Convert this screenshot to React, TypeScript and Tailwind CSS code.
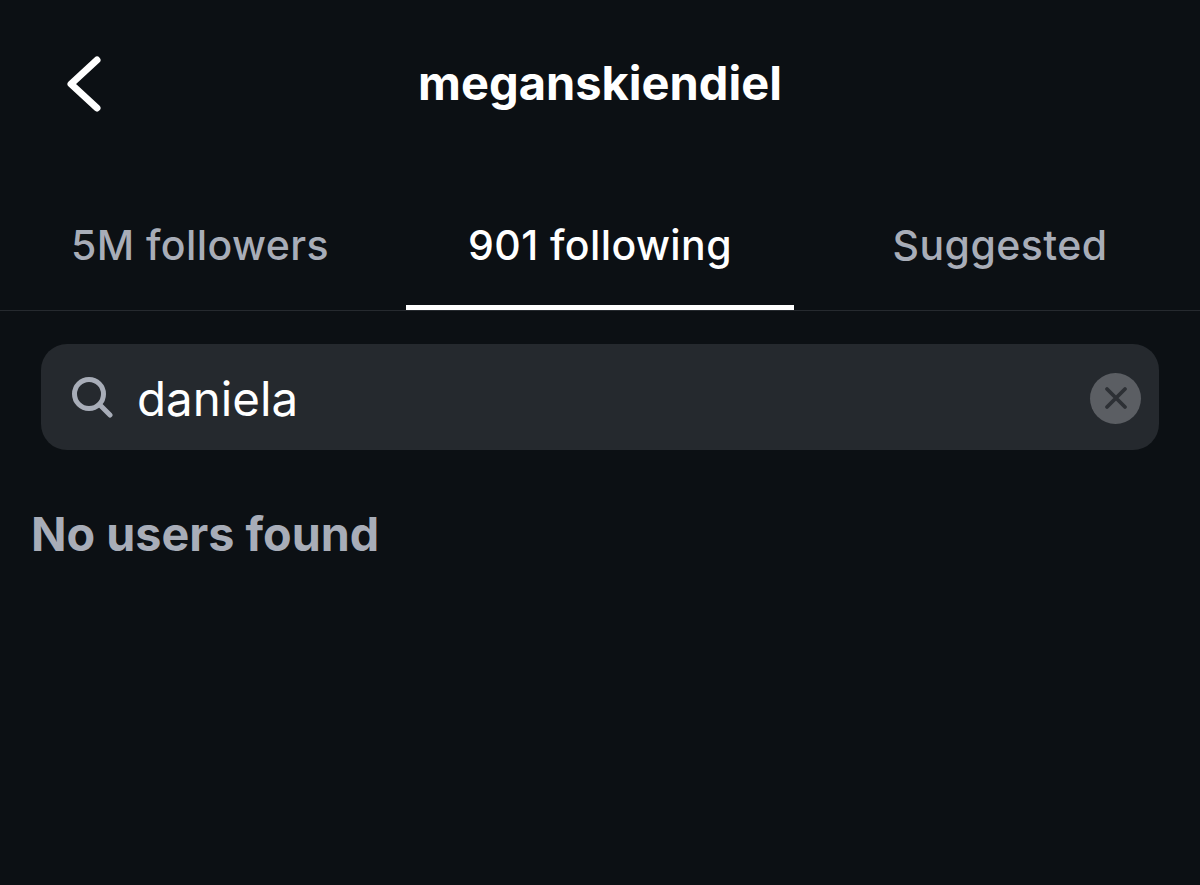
export default function App() {
  return (
    <div className="h-[885px] w-[1200px] overflow-hidden bg-[#0c1014] font-['Inter',sans-serif] text-white">
      <header className="relative flex h-[166px] items-center justify-center">
        <svg className="absolute left-[60px] top-[50px]" width="48" height="68" viewBox="0 0 48 68" fill="none" stroke="#fff" strokeWidth="7" strokeLinecap="round" strokeLinejoin="round">
          <path d="M37 10 L11 34 L37 58" />
        </svg>
        <h1 className="pb-[2px] text-[47px] font-bold leading-none">meganskiendiel</h1>
      </header>
      <nav className="grid h-[145px] grid-cols-3 border-b border-[#262a2f] text-[41px] font-[550] leading-none tracking-[0.01em]">
        <div className="flex items-center justify-center pt-[15px] text-[#a8adb8]">5M followers</div>
        <div className="relative flex items-center justify-center pt-[15px]">
          901 following
          <span className="absolute bottom-[0px] left-[6px] right-[6px] h-[5px] bg-white" />
        </div>
        <div className="flex items-center justify-center pt-[15px] text-[#a8adb8]">Suggested</div>
      </nav>
      <div className="mx-[41px] mt-[33px] flex h-[106px] items-center rounded-[26px] bg-[#25292e] pl-[30px] pr-[18px]">
        <svg width="42" height="42" viewBox="0 0 42 42" fill="none" stroke="#a8adb8" strokeWidth="5" strokeLinecap="round">
          <circle cx="18" cy="18" r="14.5" />
          <path d="M28.5 28.5 L39 39" />
        </svg>
        <span className="ml-[24px] flex-1 pt-[4px] text-[47.5px] font-normal leading-none">daniela</span>
        <span className="mt-[2px] flex h-[51px] w-[51px] items-center justify-center rounded-full bg-[#5b5e63]">
          <svg width="24" height="24" viewBox="0 0 24 24" fill="none" stroke="#2d3035" strokeWidth="3.8" strokeLinecap="round">
            <path d="M3 3 L21 21 M21 3 L3 21" />
          </svg>
        </span>
      </div>
      <p className="ml-[31px] mt-[56px] text-[46.7px] font-bold leading-[56px] text-[#a8adb8]">No users found</p>
    </div>
  );
}
